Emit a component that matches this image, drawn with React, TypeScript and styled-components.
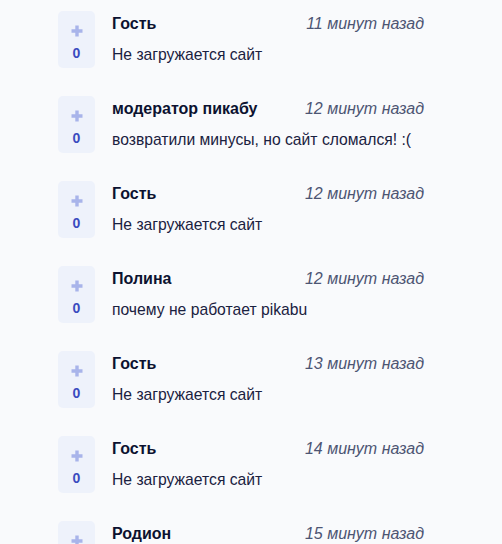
import React from "react";
import styled, { createGlobalStyle } from "styled-components";

const GlobalStyle = createGlobalStyle`
  html, body {
    margin: 0;
    padding: 0;
    background: #f9fafc;
  }
  body {
    font-family: "Liberation Sans", Arial, sans-serif;
  }
`;

const List = styled.div`
  display: flex;
  flex-direction: column;
  gap: 28px;
  padding: 11px 78px 0 58px;
  height: 544px;
  overflow: hidden;
  box-sizing: border-box;
`;

const Comment = styled.div`
  display: flex;
  align-items: flex-start;
  gap: 17px;
`;

const Vote = styled.div`
  flex: none;
  width: 37px;
  height: 57px;
  border-radius: 5px;
  background: #eef2fb;
  display: flex;
  flex-direction: column;
  align-items: center;
  padding-top: 14px;
  box-sizing: border-box;
`;

const Plus = styled.svg`
  display: block;
  width: 12px;
  height: 12px;
`;

const Score = styled.span`
  margin-top: 7px;
  font-size: 14px;
  line-height: 18px;
  font-weight: 700;
  color: #3b4cc0;
`;

const Body = styled.div`
  flex: 1;
  min-width: 0;
  padding-top: 3px;
`;

const Head = styled.div`
  display: flex;
  justify-content: space-between;
  align-items: baseline;
`;

const Author = styled.span`
  font-size: 16px;
  line-height: 20px;
  font-weight: 700;
  color: #0c1230;
`;

const Time = styled.span`
  font-size: 16px;
  line-height: 20px;
  font-style: italic;
  color: #4d5573;
`;

const Text = styled.div`
  margin-top: 10px;
  font-size: 15.7px;
  line-height: 22px;
  color: #1a2140;
`;

const comments = [
  { author: "Гость", time: "11 минут назад", text: "Не загружается сайт" },
  {
    author: "модератор пикабу",
    time: "12 минут назад",
    text: "возвратили минусы, но сайт сломался! :(",
  },
  { author: "Гость", time: "12 минут назад", text: "Не загружается сайт" },
  { author: "Полина", time: "12 минут назад", text: "почему не работает pikabu" },
  { author: "Гость", time: "13 минут назад", text: "Не загружается сайт" },
  { author: "Гость", time: "14 минут назад", text: "Не загружается сайт" },
  { author: "Родион", time: "15 минут назад", text: "Не загружается сайт" },
];

const App = () => (
  <React.Fragment>
    <GlobalStyle />
    <List>
      {comments.map((c, i) => (
        <Comment key={i}>
          <Vote>
            <Plus viewBox="0 0 12 12">
              <path d="M6 0.5v11M0.5 6h11" stroke="#a8b4ea" strokeWidth="3.4" />
            </Plus>
            <Score>0</Score>
          </Vote>
          <Body>
            <Head>
              <Author>{c.author}</Author>
              <Time>{c.time}</Time>
            </Head>
            <Text>{c.text}</Text>
          </Body>
        </Comment>
      ))}
    </List>
  </React.Fragment>
);

export default App;
